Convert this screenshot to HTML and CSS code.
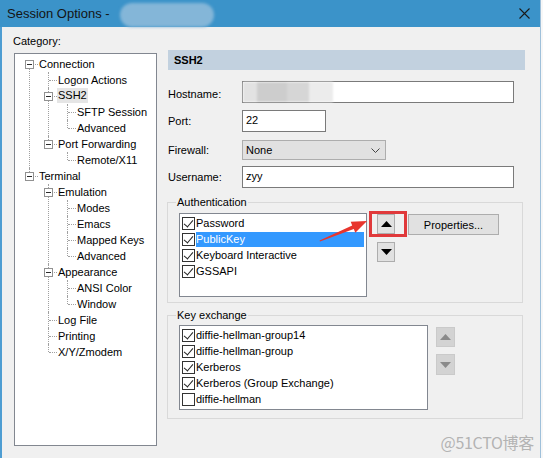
FILE: index.html
```html
<!DOCTYPE html>
<html>
<head>
<meta charset="utf-8">
<title>Session Options</title>
<link rel="stylesheet" href="styles.css">
</head>
<body>
<div class="window">
  <div class="titlebar">
    <span class="title">Session Options - </span>
    <span class="title-blur"></span>
    <svg class="close" width="11" height="11" viewBox="0 0 11 11"><path d="M0.5 0.5 L10.5 10.5 M10.5 0.5 L0.5 10.5" stroke="#1a1a1a" stroke-width="1.1" fill="none"/></svg>
  </div>
  <div class="main">
    <div class="left">
      <div class="cat-label">Category:</div>
      <div class="tree">
        <ul class="root">
          <li>
            <div class="row"><span class="slot"><span class="exp"></span></span><span class="lbl">Connection</span></div>
            <ul>
              <li><div class="row"><span class="slot"></span><span class="lbl">Logon Actions</span></div></li>
              <li>
                <div class="row"><span class="slot"><span class="exp"></span></span><span class="lbl sel">SSH2</span></div>
                <ul>
                  <li><div class="row"><span class="slot"></span><span class="lbl">SFTP Session</span></div></li>
                  <li><div class="row"><span class="slot"></span><span class="lbl">Advanced</span></div></li>
                </ul>
              </li>
              <li>
                <div class="row"><span class="slot"><span class="exp"></span></span><span class="lbl">Port Forwarding</span></div>
                <ul>
                  <li><div class="row"><span class="slot"></span><span class="lbl">Remote/X11</span></div></li>
                </ul>
              </li>
            </ul>
          </li>
          <li>
            <div class="row"><span class="slot"><span class="exp"></span></span><span class="lbl">Terminal</span></div>
            <ul>
              <li>
                <div class="row"><span class="slot"><span class="exp"></span></span><span class="lbl">Emulation</span></div>
                <ul>
                  <li><div class="row"><span class="slot"></span><span class="lbl">Modes</span></div></li>
                  <li><div class="row"><span class="slot"></span><span class="lbl">Emacs</span></div></li>
                  <li><div class="row"><span class="slot"></span><span class="lbl">Mapped Keys</span></div></li>
                  <li><div class="row"><span class="slot"></span><span class="lbl">Advanced</span></div></li>
                </ul>
              </li>
              <li>
                <div class="row"><span class="slot"><span class="exp"></span></span><span class="lbl">Appearance</span></div>
                <ul>
                  <li><div class="row"><span class="slot"></span><span class="lbl">ANSI Color</span></div></li>
                  <li><div class="row"><span class="slot"></span><span class="lbl">Window</span></div></li>
                </ul>
              </li>
              <li><div class="row"><span class="slot"></span><span class="lbl">Log File</span></div></li>
              <li><div class="row"><span class="slot"></span><span class="lbl">Printing</span></div></li>
              <li><div class="row"><span class="slot"></span><span class="lbl">X/Y/Zmodem</span></div></li>
            </ul>
          </li>
        </ul>
      </div>
    </div>

    <div class="right">
      <div class="header">SSH2</div>
      <div class="field f-host">
        <span class="flabel">Hostname:</span>
        <div class="input wide"><span class="host-blur"><i class="b1"></i><i class="b2"></i><i class="b3"></i><i class="b4"></i></span></div>
      </div>
      <div class="field f-port">
        <span class="flabel">Port:</span>
        <div class="input port">22</div>
      </div>
      <div class="field f-fw">
        <span class="flabel">Firewall:</span>
        <div class="select"><span>None</span><svg width="9" height="5" viewBox="0 0 9 5"><path d="M0.5 0.5 L4.5 4.5 L8.5 0.5" stroke="#444" fill="none" stroke-width="1"/></svg></div>
      </div>
      <div class="field f-user">
        <span class="flabel">Username:</span>
        <div class="input wide">zyy</div>
      </div>

      <div class="group auth">
        <span class="legend">Authentication</span>
        <div class="list auth-list">
          <div class="item"><span class="cb on"></span><span class="txt">Password</span></div>
          <div class="item"><span class="cb on"></span><span class="txt hl">PublicKey</span></div>
          <div class="item"><span class="cb on"></span><span class="txt">Keyboard Interactive</span></div>
          <div class="item"><span class="cb on"></span><span class="txt">GSSAPI</span></div>
        </div>
        <div class="arrows a-auth">
          <div class="abtn up"><svg width="11" height="6" viewBox="0 0 11 6"><polygon points="0,6 11,6 5.5,0" fill="#000"/></svg></div>
          <div class="abtn down"><svg width="11" height="6" viewBox="0 0 11 6"><polygon points="0,0 11,0 5.5,6" fill="#000"/></svg></div>
        </div>
        <div class="btn props">Properties...</div>
      </div>

      <div class="group kex">
        <span class="legend">Key exchange</span>
        <div class="list kex-list">
          <div class="item"><span class="cb on"></span><span class="txt">diffie-hellman-group14</span></div>
          <div class="item"><span class="cb on"></span><span class="txt">diffie-hellman-group</span></div>
          <div class="item"><span class="cb on"></span><span class="txt">Kerberos</span></div>
          <div class="item"><span class="cb on"></span><span class="txt">Kerberos (Group Exchange)</span></div>
          <div class="item"><span class="cb"></span><span class="txt">diffie-hellman</span></div>
        </div>
        <div class="arrows a-kex">
          <div class="abtn dis up"><svg width="11" height="6" viewBox="0 0 11 6"><polygon points="0,6 11,6 5.5,0" fill="#8a8a8a"/></svg></div>
          <div class="abtn dis down"><svg width="11" height="6" viewBox="0 0 11 6"><polygon points="0,0 11,0 5.5,6" fill="#8a8a8a"/></svg></div>
        </div>
      </div>
    </div>
  </div>
</div>

<div class="redbox"></div>
<svg class="annot" width="543" height="458" viewBox="0 0 543 458">
  <polygon points="320,241.5 319.6,240.5 352.2,225.5 350.7,221.8 367,221 355.3,232.8 353.8,229.1" fill="#e8352d"/>
</svg>
<div class="watermark">@51CTO博客</div>
</body>
</html>
```

FILE: styles.css
```css
* { box-sizing: border-box; }

html, body {
  margin: 0;
  padding: 0;
}

body {
  width: 543px;
  height: 458px;
  overflow: hidden;
  position: relative;
  background: #f7f7f7;
  font-family: "Liberation Sans", Arial, sans-serif;
  font-size: 11px;
  color: #000;
}

.window {
  width: 541px;
  height: 458px;
  background: #f0f0f0;
  border-left: 2px solid #4e9dd2;
  border-right: 1px solid #9fc0da;
}

.titlebar {
  height: 27px;
  margin-left: -2px;
  padding-left: 7px;
  background: #3b93c9;
  display: flex;
  align-items: center;
}

.title {
  font-size: 13px;
  color: #141414;
  white-space: pre;
}

.title-blur {
  width: 94px;
  height: 24px;
  margin-left: 7px;
  margin-top: 3px;
  border-radius: 12px;
  background: #84b6d8;
  filter: blur(1.5px);
}

.close {
  margin-left: auto;
  margin-right: 10px;
}

.main {
  display: flex;
  align-items: flex-start;
}

/* left column */
.left {
  padding-left: 11px;
  width: 155px;
}

.cat-label {
  margin-top: 7px;
  line-height: 14px;
}

.tree {
  margin-top: 5px;
  margin-left: 1px;
  width: 143px;
  height: 393px;
  background: #fff;
  border: 1px solid #828790;
}

.tree ul {
  list-style: none;
  margin: 0;
  padding: 0 0 0 19px;
}

.tree ul.root {
  padding: 2px 0 0 5px;
}

.tree li {
  position: relative;
}

.tree li::before {
  content: "";
  position: absolute;
  left: 9px;
  top: 0;
  bottom: 0;
  border-left: 1px dotted #a0a0a0;
}

.tree li:last-child::before {
  bottom: auto;
  height: 8px;
}

.tree ul.root > li:first-child::before {
  top: 8px;
}

.row {
  height: 16px;
  display: flex;
  align-items: flex-start;
  position: relative;
}

.slot {
  width: 19px;
  height: 16px;
  flex: none;
  position: relative;
}

.slot::after {
  content: "";
  position: absolute;
  left: 10px;
  top: 8px;
  width: 8px;
  border-top: 1px dotted #a0a0a0;
}

.exp {
  position: absolute;
  left: 5px;
  top: 4px;
  width: 9px;
  height: 9px;
  border: 1px solid #919191;
  background: #fff;
  z-index: 1;
}

.exp::after {
  content: "";
  position: absolute;
  left: 1px;
  top: 3px;
  width: 5px;
  height: 1px;
  background: #2b2b2b;
}

.lbl {
  line-height: 14px;
  margin-top: 1px;
  white-space: nowrap;
}

.lbl.sel {
  background: #e5e5e5;
  margin-left: -1px;
  padding: 0 1px;
  margin-top: 0;
  line-height: 15px;
}

/* right column */
.right {
  margin-left: 11px;
  margin-top: 23px;
  width: 357px;
}

.header {
  height: 20px;
  background: #c2d1df;
  font-weight: bold;
  padding-left: 6px;
  line-height: 20px;
}

.field {
  display: flex;
  align-items: center;
}

.flabel {
  width: 74px;
  flex: none;
}

.f-host { margin-top: 11px; }
.f-port { margin-top: 7px; }
.f-fw { margin-top: 8px; }
.f-user { margin-top: 6px; }

.f-host .flabel { margin-top: 3px; }

.input {
  height: 22px;
  background: #fff;
  border: 1px solid #7a7a7a;
  padding-left: 3px;
  line-height: 18px;
  position: relative;
}

.input.wide { width: 272px; }
.input.port { width: 84px; }

.host-blur {
  display: flex;
  height: 20px;
  margin-left: -3px;
  filter: blur(1.2px);
}

.host-blur i {
  display: block;
  height: 100%;
}

.host-blur .b1 { width: 14px; background: #e2e2e2; }
.host-blur .b2 { width: 30px; background: #cdcdcd; }
.host-blur .b3 { width: 22px; background: #d6d6d6; }
.host-blur .b4 { width: 24px; background: #ececec; }

.select {
  width: 144px;
  height: 20px;
  background: #e1e1e1;
  border: 1px solid #adadad;
  display: flex;
  align-items: center;
  justify-content: space-between;
  padding: 0 5px 0 3px;
}

/* groups */
.group {
  position: relative;
  margin-left: -1px;
  width: 356px;
  border: 1px solid #d9d9d9;
  display: flex;
  align-items: flex-start;
  padding-left: 11px;
}

.legend {
  position: absolute;
  top: -8px;
  left: 8px;
  padding: 0 1px;
  background: #f0f0f0;
  line-height: 14px;
}

.auth {
  margin-top: 14px;
  height: 101px;
  padding-top: 10px;
}

.kex {
  margin-top: 12px;
  height: 104px;
  padding-top: 9px;
}

.list {
  background: #fff;
  border: 1px solid #828790;
  padding: 1px 1px 0 0;
  flex: none;
}

.auth-list { width: 188px; height: 84px; }
.kex-list { width: 249px; height: 85px; }

.item {
  height: 16px;
  display: flex;
  align-items: center;
}

.cb {
  width: 13px;
  height: 13px;
  margin-left: 2px;
  border: 1px solid #333;
  background: #fff;
  flex: none;
  position: relative;
}

.cb.on::after {
  content: "";
  position: absolute;
  left: 3px;
  top: 0px;
  width: 4px;
  height: 8px;
  border-right: 1.5px solid #222;
  border-bottom: 1.5px solid #222;
  transform: rotate(40deg);
}

.txt {
  flex: 1;
  margin-left: 1px;
  line-height: 15px;
  white-space: nowrap;
}

.txt.hl {
  background: #3399ff;
  color: #fff;
  margin-right: 1px;
}

.arrows {
  display: flex;
  flex-direction: column;
}

.a-auth { margin-left: 10px; margin-top: 1px; gap: 8px; }
.a-kex { margin-left: 8px; margin-top: 2px; gap: 7px; }

.abtn {
  width: 18px;
  height: 20px;
  background: #e1e1e1;
  border: 1px solid #adadad;
  display: flex;
  align-items: center;
  justify-content: center;
}

.a-kex .abtn { width: 19px; }
.a-kex .down { height: 21px; }

.abtn.dis {
  background: #d3d3d3;
  border-color: #cacaca;
}

.btn {
  background: #e1e1e1;
  border: 1px solid #adadad;
  display: flex;
  align-items: center;
  justify-content: center;
}

.props {
  width: 91px;
  height: 21px;
  margin-left: 13px;
  margin-top: 1px;
}

/* annotation overlays */
.redbox {
  position: absolute;
  left: 369px;
  top: 211px;
  width: 38px;
  height: 26px;
  border: 3px solid #e0393b;
}

.annot {
  position: absolute;
  left: 0;
  top: 0;
  pointer-events: none;
}

.watermark {
  position: absolute;
  right: 9px;
  top: 432px;
  font-family: "Noto Sans CJK SC", "Liberation Sans", sans-serif;
  font-size: 16px;
  line-height: 20px;
  color: #b3b3b3;
  letter-spacing: -0.3px;
}
```
